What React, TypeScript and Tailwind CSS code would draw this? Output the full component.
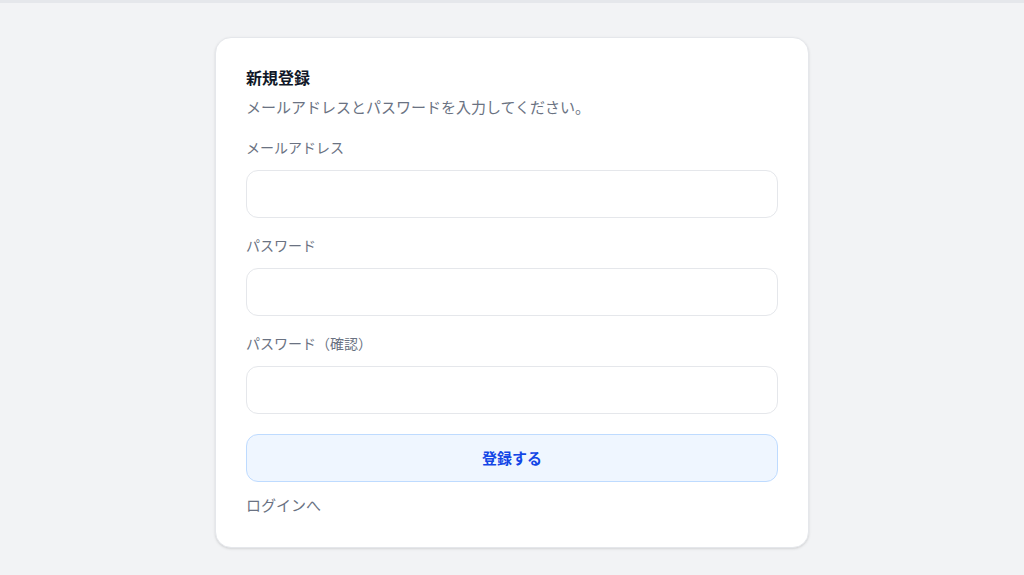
import React from 'react';

const font = { fontFamily: '"Noto Sans CJK JP", "Noto Sans", sans-serif' };

const Field: React.FC<{ label: string; type?: string }> = ({ label, type = 'text' }) => (
  <div className="flex flex-col">
    <label className="text-[14px] leading-[20px] text-gray-500">{label}</label>
    <input
      type={type}
      className="mt-[13px] h-[48px] w-full rounded-xl border border-gray-200 bg-white px-4 text-[15px] outline-none"
    />
  </div>
);

export default function App() {
  return (
    <div
      className="min-h-[575px] w-full border-t-[3px] border-gray-200 bg-[#f2f3f5] pt-[34px] pb-[28px]"
      style={font}
    >
      <div className="mx-auto w-[594px] rounded-2xl border border-gray-200 bg-white px-[30px] pt-[28px] pb-[31px] shadow-sm">
        <h1 className="text-[16px] font-bold leading-[22px] text-gray-900">新規登録</h1>
        <p className="mt-[8px] text-[15px] leading-[22px] text-gray-500">
          メールアドレスとパスワードを入力してください。
        </p>

        <div className="mt-[19px] flex flex-col gap-[17px]">
          <Field label="メールアドレス" type="email" />
          <Field label="パスワード" type="password" />
          <Field label="パスワード（確認）" type="password" />
        </div>

        <button className="mt-[20px] h-[48px] w-full rounded-xl border border-blue-200 bg-blue-50 text-[15px] font-bold text-blue-700">
          登録する
        </button>

        <div className="mt-[12px] text-[15px] leading-[22px] text-gray-500">ログインへ</div>
      </div>
    </div>
  );
}
